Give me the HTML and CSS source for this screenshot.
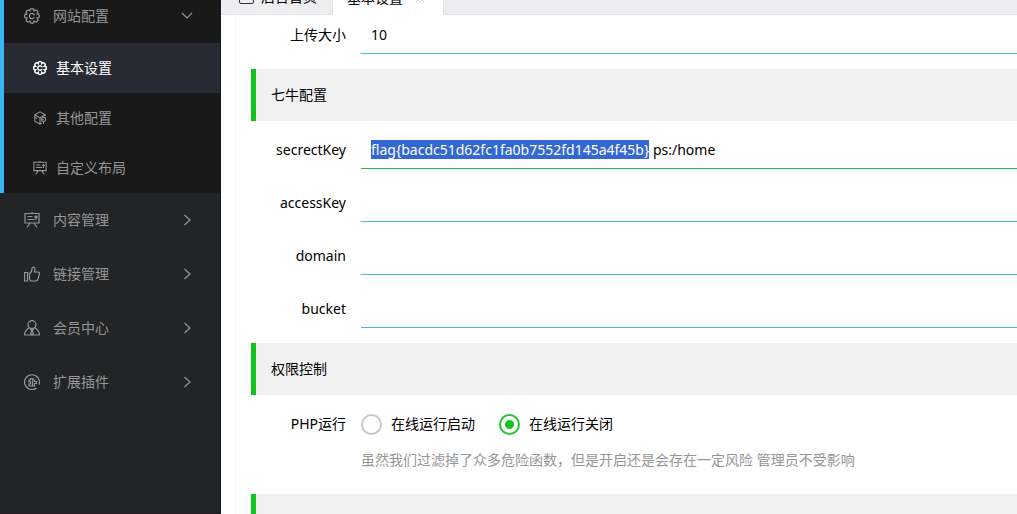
FILE: index.html
```html
<!DOCTYPE html>
<html lang="zh-CN">
<head>
<meta charset="utf-8">
<title>基本设置</title>
<link rel="stylesheet" href="styles.css">
</head>
<body>
<svg class="sprite" aria-hidden="true">
  <symbol id="gear" viewBox="0 0 16 16"><path d="M5.900 2.900C5.900-.2 10.100-.2 10.100 2.900 12.300.800 15.200 3.700 13.100 5.900 16.200 5.900 16.200 10.100 13.100 10.100 15.200 12.300 12.300 15.200 10.100 13.100 10.100 16.200 5.900 16.200 5.900 13.100 3.700 15.200.800 12.300 2.900 10.100-.2 10.100-.2 5.900 2.900 5.900.800 3.700 3.700.800 5.900 2.900z"/><path d="M10.300 9.300a2.600 2.600 0 1 1 .2-2"/></symbol>
  <symbol id="cube" viewBox="0 0 16 16"><path d="M14 6V4.300L8 1 2 4.300v7.300L8 15l2-1M2 4.300l6 3.400 6-3.400M8 7.700V15M2 7l3 1.500"/><circle cx="12" cy="9.500" r="2.500"/><path d="M10 9.500h2.500M12 12v2.500"/></symbol>
  <symbol id="board" viewBox="0 0 16 16"><path d="M1 1.500h14v9.500H1zM3.500 4.500h5M3.500 7.500h7M12 4v4M10.500 5.500 12 4l1.500 1.500M8 0v1.500M6 11l-3 4.500M10 11l3 4.500"/></symbol>
  <symbol id="thumb" viewBox="0 0 16 16"><path d="M3.500 6.500H.500V15h3zM5.500 13.500V7.500C7.500 6.500 8 5 8 2.500 8 .500 11 .500 11 3c0 1.300-.3 2.300-.5 3h3.500c1.500 0 1.700 1.200 1.300 2.500l-1.300 4.500c-.4 1.500-1 2-2.500 2H7z"/></symbol>
  <symbol id="user" viewBox="0 0 16 16"><circle cx="8" cy="4.700" r="4"/><path d="M5 8C2.500 9.500.500 12 .500 15h15c0-3-2-5.500-4.500-7M7 9.500h2l-.5 1.500.8 2.500L8 15l-1.300-1.500.8-2.500z"/></symbol>
  <symbol id="plug" viewBox="0 0 16 16"><path d="M12.500 14A7.400 7.400 0 1 1 15 10.500M5 6h1.500V4.500h2.500V6h1.500v1.500h2v2h-2V12H5v-2h1.500V8H5zM8.500 6.500v5"/></symbol>
  <symbol id="right" viewBox="0 0 16 16"><path d="m5.500 3 5.500 5-5.500 5"/></symbol>
  <symbol id="down" viewBox="0 0 16 16"><path d="m3 5 5 5 5-5"/></symbol>
</svg>
<div class="app">
  <nav class="sidebar">
    <div class="group">
      <a class="item item-open" href="#"><svg class="icon"><use href="#gear"/></svg><span>网站配置</span><svg class="arrow"><use href="#down"/></svg></a>
      <a class="sub active" href="#"><svg class="icon"><use href="#gear"/></svg><span>基本设置</span></a>
      <a class="sub" href="#"><svg class="icon"><use href="#cube"/></svg><span>其他配置</span></a>
      <a class="sub" href="#"><svg class="icon"><use href="#board"/></svg><span>自定义布局</span></a>
    </div>
    <a class="item" href="#"><svg class="icon"><use href="#board"/></svg><span>内容管理</span><svg class="arrow"><use href="#right"/></svg></a>
    <a class="item" href="#"><svg class="icon"><use href="#thumb"/></svg><span>链接管理</span><svg class="arrow"><use href="#right"/></svg></a>
    <a class="item" href="#"><svg class="icon"><use href="#user"/></svg><span>会员中心</span><svg class="arrow"><use href="#right"/></svg></a>
    <a class="item" href="#"><svg class="icon"><use href="#plug"/></svg><span>扩展插件</span><svg class="arrow"><use href="#right"/></svg></a>
  </nav>
  <main class="main">
    <div class="tabs">
      <a class="tab" href="#"><i class="tab-icon"></i>后台首页</a>
      <a class="tab current" href="#">基本设置<svg class="close" viewBox="0 0 10 10"><path d="m1 1 8 8M9 1 1 9"/></svg></a>
    </div>
    <form class="form">
      <div class="row"><label class="label" for="size">上传大小</label><input class="field" id="size" type="text" value="10"></div>
      <h2 class="section">七牛配置</h2>
      <div class="row"><label class="label" for="secret">secrectKey</label><input class="field field-on" id="secret" type="text" spellcheck="false" value="flag{bacdc51d62fc1fa0b7552fd145a4f45b} ps:/home"></div>
      <div class="row"><label class="label" for="access">accessKey</label><input class="field" id="access" type="text"></div>
      <div class="row"><label class="label" for="domain">domain</label><input class="field" id="domain" type="text"></div>
      <div class="row"><label class="label" for="bucket">bucket</label><input class="field" id="bucket" type="text"></div>
      <h2 class="section">权限控制</h2>
      <div class="row row-radio" role="radiogroup" aria-labelledby="php">
        <span class="label" id="php">PHP运行</span>
        <label class="choice"><input class="radio" type="radio" name="php"><span>在线运行启动</span></label>
        <label class="choice"><input class="radio" type="radio" name="php" checked><span>在线运行关闭</span></label>
      </div>
      <p class="hint">虽然我们过滤掉了众多危险函数，但是开启还是会存在一定风险 管理员不受影响</p>
      <div class="section"></div>
    </form>
  </main>
</div>
<script src="main.js"></script>
</body>
</html>
```
FILE: styles.css
```css
* { box-sizing: border-box; }
body {
  margin: 0;
  background: #fff;
  color: #000;
  font: 14px/20px "Noto Sans", "Noto Sans CJK SC", sans-serif;
}
a { color: inherit; text-decoration: none; }
.sprite { position: absolute; width: 0; height: 0; }
.app { display: flex; height: 100vh; overflow: hidden; }

.sidebar {
  flex: 0 0 221px;
  background: #222426;
  border-right: 1px solid #0b1a26;
  border-bottom: 1px solid #1f171b;
  color: #969696;
}
.group { background: #191919; border-left: 4px solid #3db5f2; }
.item { display: flex; align-items: center; height: 54px; padding: 0 25px 0 24px; }
.item-open { height: 43px; padding: 0 25px 11px 20px; }
.icon, .arrow { flex: none; fill: none; stroke: currentColor; stroke-width: 1.2; }
.icon { width: 16px; height: 16px; margin-right: 13px; }
.arrow { width: 16px; height: 16px; margin-left: auto; }
.sub { display: flex; align-items: center; height: 50px; padding-left: 29px; }
.sub .icon { width: 14px; height: 14px; margin-right: 9px; }
.active { background: #282b33; color: #fff; }
.active .icon { stroke-width: 1.7; }

.main { flex: 1; min-width: 0; }
.tabs {
  display: flex;
  height: 15px;
  background: #eeeef0;
  border-bottom: 1px solid #e2e2e4;
}
.tab {
  display: flex;
  align-items: center;
  align-self: flex-end;
  height: 32px;
  padding: 0 15px 2px 18px;
}
.tab-icon { width: 15px; height: 14px; margin-right: 7px; border: 1px solid #333; border-radius: 2px; }
.current { padding: 0 18px 2px 14px; margin-bottom: -1px; background: #fff; border: 1px solid #e2e2e4; border-width: 0 1px; }
.close { width: 10px; height: 10px; margin-left: 12px; fill: none; stroke: #c4c4c4; }

.form { margin-left: 14px; padding: 1px 0 0 15px; border-left: 1px solid #f6f6f6; }
.row { display: flex; align-items: center; height: 38px; margin-bottom: 15px; }
.label { flex: 0 0 95px; margin-right: 15px; text-align: right; }
.field {
  flex: 1;
  min-width: 0;
  height: 38px;
  padding: 0 10px;
  border: 0;
  border-bottom: 1px solid #4cb8ea;
  background: none;
  color: inherit;
  font: inherit;
  outline: 0;
}
.field-on { border-color: #1fc04a; }
.field::selection { background: #3367d1; color: #fff; }
.section {
  height: 52px;
  margin: 0 0 10px;
  padding: 16px 15px;
  border-left: 5px solid #10c41b;
  background: #f1f1f1;
  font-size: 14px;
  font-weight: 400;
}
.row-radio { margin-bottom: 7px; }
.choice { display: flex; align-items: center; margin-right: 24px; }
.radio {
  appearance: none;
  width: 21px;
  height: 21px;
  margin: 0 9px 0 0;
  border: 2px solid #c8c8c8;
  border-radius: 50%;
}
.radio:checked { border-color: #2cc436; background: radial-gradient(circle, #10c41b 4px, #fff 5px); }
.hint { margin: 0 0 24px 110px; color: #969696; }
```
FILE: main.js
```js
const secret = document.getElementById("secret");
secret.focus();
secret.setSelectionRange(0, secret.value.indexOf("}") + 1);
```
